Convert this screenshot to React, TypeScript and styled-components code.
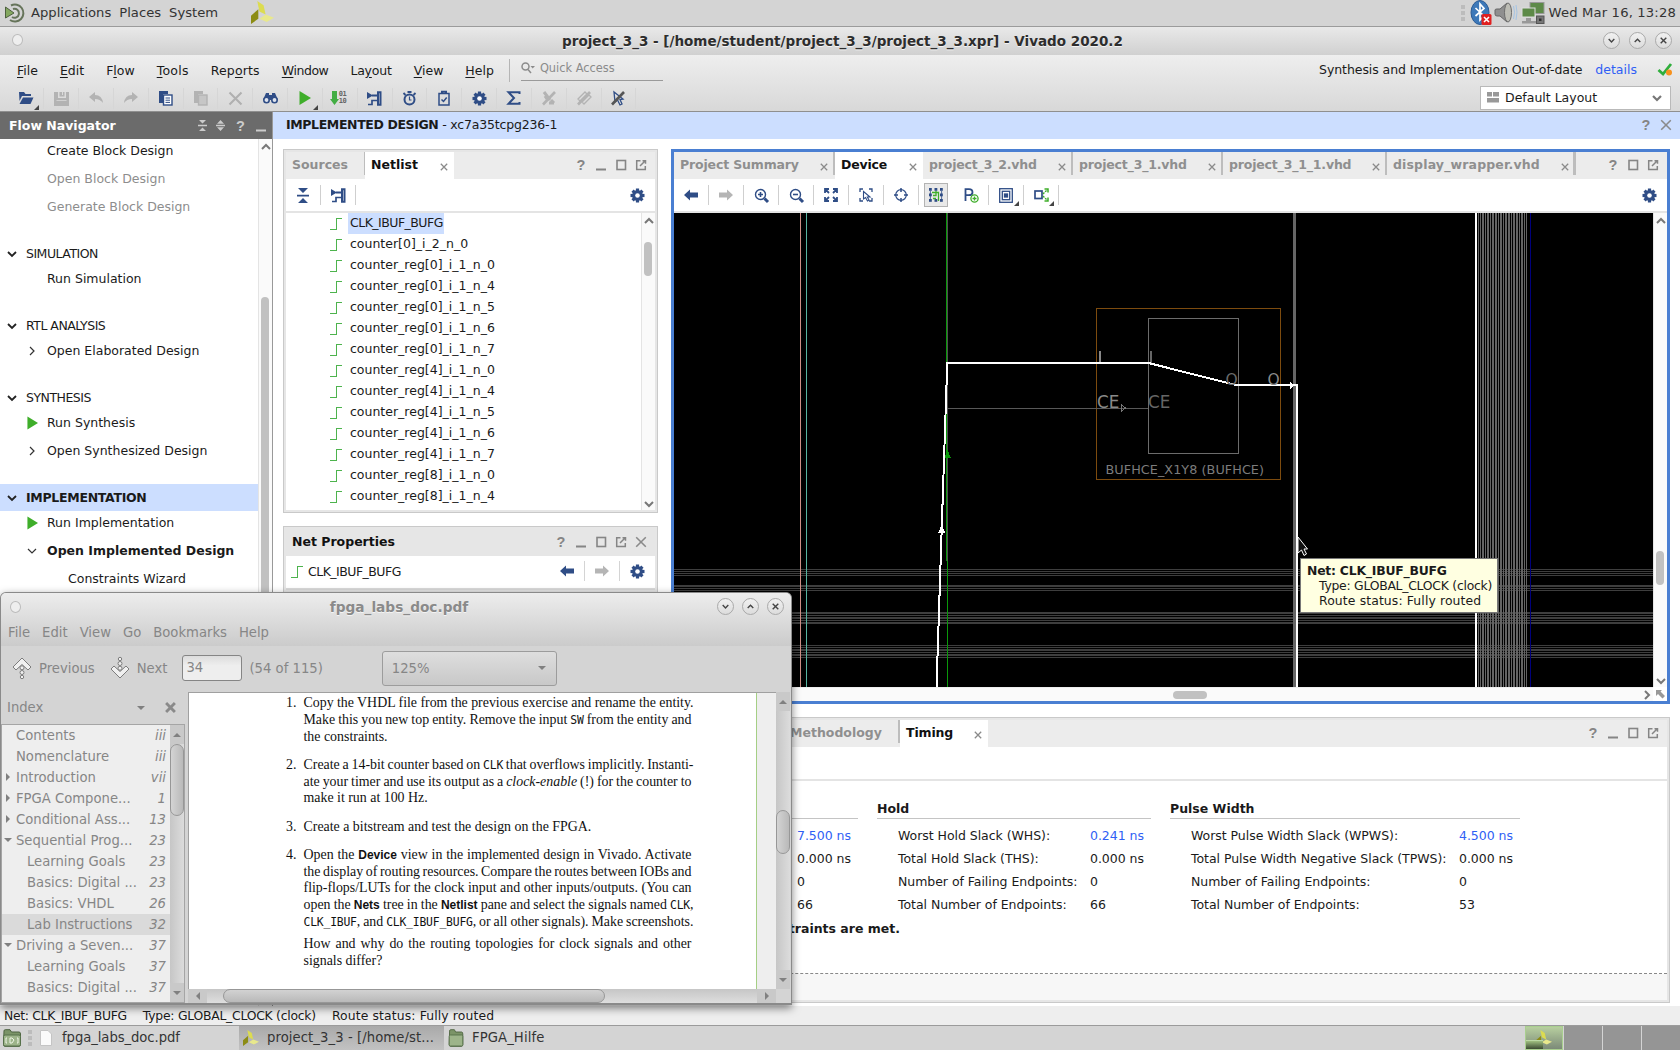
import React from 'react';
import styled, { createGlobalStyle, css } from 'styled-components';

const NAVY = '#2f4d86';
const GREEN = '#3fae2a';
const UI = '"DejaVu Sans", "Liberation Sans", sans-serif';

const Global = createGlobalStyle`
  * { box-sizing: border-box; }
  body { margin: 0; background: #d4d4d4; }
`;

const Screen = styled.div`
  position: relative;
  width: 1680px;
  height: 1050px;
  overflow: hidden;
  display: flex;
  flex-direction: column;
  font-family: ${UI};
  font-size: 12.5px;
  color: #1a1a1a;
  white-space: nowrap;
  svg { display: block; flex: none; overflow: visible; }
`;

const Track = styled.span<{ $ls: number }>`
  letter-spacing: ${p => p.$ls}px;
`;

/* ---------- desktop panel ---------- */
const TopPanel = styled.div`
  height: 27px;
  flex: none;
  display: flex;
  align-items: center;
  background: #d4d4d4;
  border-bottom: 1px solid #9b9b9b;
  font-size: 13.15px;
  color: #333;
  padding: 0 4px 1px 5px;
`;
const PanelMenu = styled.div`
  display: flex;
  gap: 8px;
  margin: 0 33px 0 6px;
`;
const Tray = styled.div`
  margin-left: auto;
  display: flex;
  align-items: center;
  gap: 4px;
`;
const Grip = styled.div`
  width: 4px;
  height: 16px;
  margin-right: 2px;
  background: repeating-linear-gradient(#bcbcbc 0 4px, transparent 4px 6px);
`;
const TaskGrip = styled(Grip)`
  margin: 0 4px 0 6px;
`;

/* ---------- main window chrome ---------- */
const TitleBar = styled.div`
  height: 28px;
  flex: none;
  display: flex;
  align-items: center;
  background: linear-gradient(#e9e9e9, #d0d0d0);
  padding: 0 8px 2px 12px;
`;
const Title = styled.div<{ $muted?: boolean }>`
  flex: 1;
  padding: ${p => (p.$muted ? '0 0 0 60px' : '2px 0 0 59px')};
  text-align: center;
  font-weight: bold;
  font-size: ${p => (p.$muted ? 13.7 : 13.53)}px;
  color: ${p => (p.$muted ? '#8a8a8a' : '#2d2d2d')};
  text-shadow: 0 1px 0 #f4f4f4;
`;
const Knob = styled.div`
  width: 11px;
  height: 12px;
  border-radius: 50%;
  border: 1px solid #bbb;
  background: #eee;
`;
const RoundBtns = styled.div<{ $gap: number }>`
  display: flex;
  gap: ${p => p.$gap}px;
`;
const RoundBtn = styled.div`
  width: 17px;
  height: 17px;
  border-radius: 50%;
  border: 1px solid #a9a9a9;
  background: linear-gradient(#f1f1f1, #dcdcdc);
  display: grid;
  place-items: center;
`;

const Header = styled.div`
  height: 57px;
  flex: none;
  background: linear-gradient(#eeeeee, #d8d8d8);
  border-bottom: 1px solid #8f8f8f;
`;
const MenuRow = styled.div`
  height: 30px;
  display: flex;
  align-items: center;
  padding: 1px 8px 0 6px;
`;
const MenuItem = styled.div<{ $ls: number }>`
  padding: 0 11px;
  letter-spacing: ${p => p.$ls}px;
  u { text-underline-offset: 2px; }
`;
const QuickAccess = styled.div`
  margin-left: 4px;
  padding-left: 11px;
  height: 23px;
  display: flex;
  border-left: 1px solid #b5b5b5;
`;
const QuickField = styled.div`
  width: 142px;
  height: 22px;
  display: flex;
  align-items: center;
  gap: 5px;
  padding-bottom: 3px;
  border-bottom: 1px solid #9a9a9a;
  font-size: 11.4px;
  color: #8b8b8b;
`;
const StatusNote = styled.div`
  margin-left: auto;
  display: flex;
  align-items: center;
  padding-bottom: 2px;
  letter-spacing: -0.08px;
  a { color: #2f5ff5; margin: 0 21px 0 13px; letter-spacing: 0; }
`;
const ToolRow = styled.div`
  height: 26px;
  display: flex;
  align-items: center;
  padding: 0 9px 0 9.5px;
`;
const ToolCell = styled.div`
  position: relative;
  width: 34.83px;
  height: 21px;
  border-right: 1px solid #d6d6d6;
  display: grid;
  place-items: center;
`;
const LayoutSelect = styled.div`
  margin-left: auto;
  width: 191px;
  height: 24px;
  border: 1px solid #b9b9b9;
  background: #fff;
  display: flex;
  align-items: center;
  padding: 0 8px 1px 6px;
  gap: 6px;
  svg:last-child { margin-left: auto; }
`;
const Corner = styled.i`
  position: absolute;
  right: 4px;
  bottom: -1px;
  border-left: 5px solid transparent;
  border-bottom: 5px solid #444;
`;

/* ---------- body ---------- */
const Body = styled.div`
  height: 894px;
  flex: none;
  display: flex;
  background: #fff;
`;
const FlowNav = styled.div`
  width: 273px;
  flex: none;
  border-right: 1px solid #999;
  display: flex;
  flex-direction: column;
`;
const FlowHead = styled.div`
  height: 27px;
  flex: none;
  background: #6b6b6b;
  color: #fff;
  font-weight: bold;
  display: flex;
  align-items: center;
  padding: 0 5px 0 9px;
  gap: 8.5px;
  b { flex: 1; }
`;
const FlowBody = styled.div`
  flex: 1;
  min-height: 0;
  display: flex;
`;
const FlowTree = styled.div`
  flex: 1;
  overflow: hidden;
`;
const FlowGroup = styled.div<{ $on?: boolean }>`
  height: 27px;
  margin-top: 22px;
  display: flex;
  align-items: center;
  padding-left: 7px;
  gap: 9px;
  background: ${p => (p.$on ? '#ccdeff' : 'none')};
  font-weight: ${p => (p.$on ? 'bold' : 'normal')};
  letter-spacing: ${p => (p.$on ? '-0.3px' : '-0.5px')};
`;
const FlowItem = styled.div<{ $dim?: boolean; $bold?: boolean; $deep?: boolean }>`
  height: 23px;
  display: flex;
  align-items: center;
  padding-left: ${p => (p.$deep ? 48 : 27)}px;
  color: ${p => (p.$dim ? '#8d8d8d' : '#1a1a1a')};
  font-weight: ${p => (p.$bold ? 'bold' : 'normal')};
  & + & { margin-top: 5px; }
`;
const Slot = styled.span`
  width: 20px;
  flex: none;
  svg { display: block; }
`;
const ScrollCol = styled.div<{ $w: number }>`
  width: ${p => p.$w}px;
  flex: none;
  border-left: 1px solid #e4e4e4;
  background: #fafafa;
  display: flex;
  flex-direction: column;
  align-items: center;
`;
const Thumb = styled.div<{ $h: number; $mt: number }>`
  width: 8px;
  height: ${p => p.$h}px;
  margin-top: ${p => p.$mt}px;
  margin-right: 1px;
  border-radius: 4px;
  background: #c1c1c1;
`;
const ScrollEnd = styled.div`
  margin-top: auto;
`;
const Main = styled.div`
  flex: 1;
  display: flex;
  flex-direction: column;
`;
const DesignBar = styled.div`
  height: 27px;
  background: #ccdeff;
  display: flex;
  align-items: center;
  gap: 8px;
  padding: 0 8px 2px 13px;
`;
const DesignName = styled.div`
  flex: 1;
  letter-spacing: -0.18px;
  b { letter-spacing: -0.38px; }
`;
const Workspace = styled.div`
  flex: 1;
  display: flex;
  flex-direction: column;
  gap: 13px;
  padding: 10px 10px 3px;
`;
const UpperRow = styled.div`
  height: 555px;
  display: flex;
  gap: 13px;
`;
const LeftCol = styled.div`
  width: 375px;
  display: flex;
  flex-direction: column;
  gap: 13px;
`;
const Panel = styled.section<{ $h?: number; $active?: boolean }>`
  ${p => (p.$h ? css`height: ${p.$h}px;` : css`flex: 1;`)}
  min-height: 0;
  display: flex;
  flex-direction: column;
  ${p =>
    p.$active
      ? css`border: 3px solid #4a7fd2;`
      : css`border: 1px solid #c9c9c9; padding: 2px; background: #e6e6e6;`}
`;
const Tabs = styled.div<{ $solid?: boolean }>`
  height: 27px;
  flex: none;
  background: ${p => (p.$solid ? '#e6e6e6' : '#ececec')};
  display: flex;
  align-items: center;
  padding-right: 8px;
`;
const Tab = styled.div<{ $w: number; $on?: boolean; $sep?: number; $ls?: number }>`
  width: ${p => p.$w}px;
  height: 27px;
  flex: none;
  display: flex;
  align-items: center;
  justify-content: space-between;
  padding: 0 6px 2px 6px;
  font-weight: bold;
  letter-spacing: ${p => p.$ls ?? 0}px;
  color: ${p => (p.$on ? '#111' : '#8f8f8f')};
  background-color: ${p => (p.$on ? '#fff' : 'transparent')};
  background-image: linear-gradient(#bdbdbd, #bdbdbd);
  background-repeat: no-repeat;
  background-position: right top;
  background-size: ${p => p.$sep ?? 0}px 23px;
  svg { margin-top: 4px; margin-right: ${p => (p.$on ? 0 : 1)}px; }
`;
const PanelTitle = styled.div`
  padding: 0 6px 2px;
  font-weight: bold;
  color: #111;
`;
const TabActions = styled.div`
  margin-left: auto;
  display: flex;
  align-items: center;
  gap: 8px;
  padding-bottom: 1px;
`;
const Tools = styled.div`
  height: 34px;
  flex: none;
  background: #fff;
  border-bottom: 2px solid #e4e4e4;
  display: flex;
  align-items: center;
  padding-right: 10px;
  & > svg:last-child { margin-left: auto; }
`;
const PCell = styled(ToolCell)<{ $pressed?: boolean }>`
  width: 35px;
  height: 20px;
  border-right-color: ${p => (p.$pressed ? 'transparent' : '#cfcfcf')};
  &::before {
    content: '';
    position: absolute;
    inset: -2px 5px -2px 5px;
    ${p => p.$pressed && css`background: #e9e9e9; border: 1px solid #b3b3b3;`}
  }
  svg { position: relative; }
`;
const ListWrap = styled.div`
  flex: 1;
  min-height: 0;
  background: #fff;
  display: flex;
`;
const NetList = styled.div`
  flex: 1;
`;
const NetRow = styled.div`
  height: 21px;
  display: flex;
  align-items: center;
  padding-left: 44px;
  gap: 6px;
`;
const NetName = styled.span<{ $on?: boolean }>`
  height: 21px;
  line-height: 20px;
  padding: 0 1px 0 2px;
  background: ${p => (p.$on ? '#ccdeff' : 'none')};
  letter-spacing: ${p => (p.$on ? '-0.52px' : '0')};
`;
const NetPropRow = styled.div`
  height: 34px;
  flex: none;
  background: #fff;
  border-bottom: 2px solid #d9d9d9;
  display: flex;
  align-items: center;
  padding: 0 10px 2px 5px;
  gap: 5px;
  span { flex: 1; letter-spacing: -0.52px; }
`;
const Divider = styled.div`
  width: 1px;
  height: 20px;
  margin: 0 5px;
  background: #d4d4d4;
`;

/* ---------- device view ---------- */
const DeviceArea = styled.div`
  flex: 1;
  min-height: 0;
  display: grid;
  grid-template-columns: 979px 14px;
  grid-template-rows: 474px 14px;
`;
const Canvas = styled.div`
  position: relative;
  background: #000;
`;
const HScroll = styled.div`
  background: #fafafa;
  border-top: 1px solid #eee;
  display: flex;
  align-items: center;
  justify-content: flex-end;
  padding-right: 1px;
  div {
    width: 34px;
    height: 8px;
    border-radius: 4px;
    background: #c1c1c1;
    margin-right: 435px;
  }
`;
const Tip = styled.div`
  position: absolute;
  left: 626px;
  top: 345px;
  width: 198px;
  height: 55px;
  padding: 4px 0 0 6px;
  background: #ffffe1;
  border: 1px solid #777;
  line-height: 15px;
  font-size: 12.4px;
  b { letter-spacing: -0.22px; }
  div { padding-left: 12px; }
`;

/* ---------- timing ---------- */
const TimingBody = styled.div`
  flex: 1;
  background: #fff;
  border-bottom: 1px dashed #888;
  padding: 18px 0 0 18px;
`;
const TimingFoot = styled.div`
  height: 26px;
  flex: none;
  background: #f7f7f7;
`;
const Groups = styled.div`
  display: flex;
  padding-left: 280px;
  gap: 19px;
`;
const Group = styled.div<{ $w: number }>`
  width: ${p => p.$w}px;
`;
const GroupHead = styled.div`
  height: 20px;
  line-height: 19px;
  font-weight: bold;
  border-bottom: 1px solid #c4c4c4;
  margin-bottom: 5px;
`;
const Metric = styled.div`
  height: 23px;
  display: flex;
  align-items: center;
  padding-left: 21px;
  letter-spacing: -0.04px;
  span:first-child { flex: 1; }
`;
const MetricValue = styled.span<{ $link?: boolean }>`
  width: 61px;
  color: ${p => (p.$link ? '#2f5ff5' : 'inherit')};
`;
const Verdict = styled.div`
  width: 596px;
  text-align: right;
  font-weight: bold;
  line-height: 26px;
`;

/* ---------- status and task bars ---------- */
const StatusBar = styled.div`
  height: 20px;
  flex: none;
  background: #eee;
  border-bottom: 1px solid #9b9b9b;
  display: flex;
  align-items: center;
  gap: 16px;
  padding-left: 4px;
  font-size: 12.4px;
`;
const TaskBar = styled.div`
  height: 24px;
  flex: none;
  background: #d4d4d4;
  display: flex;
  align-items: center;
  font-size: 13.2px;
  color: #333;
  padding-left: 2px;
`;
const Task = styled.div<{ $w: number; $on?: boolean }>`
  width: ${p => p.$w}px;
  height: 24px;
  display: flex;
  align-items: center;
  gap: 8px;
  padding: 0 0 1px 4px;
  background: ${p => (p.$on ? 'linear-gradient(#a9a9a9, #c2c2c2)' : 'none')};
`;
const Pager = styled.div`
  margin-left: auto;
  display: flex;
  gap: 1px;
  background: #d4d4d4;
`;
const Desk = styled.div<{ $on?: boolean }>`
  position: relative;
  width: 38px;
  height: 24px;
  display: grid;
  place-items: center;
  background: ${p => (p.$on ? 'linear-gradient(#b7cf9f, #7c8a78)' : '#959595')};
  border: ${p => (p.$on ? '1px solid #a9cf8f' : '0')};
`;
const DeskWin = styled.div`
  position: absolute;
  left: 0;
  bottom: 0;
  width: 17px;
  height: 9px;
  background: linear-gradient(#9fbf80, #3c4a34);
  border-top: 1px solid #bcd8a4;
`;

/* ---------- document viewer window ---------- */
const PdfWindow = styled.div`
  position: absolute;
  left: 0;
  top: 592px;
  width: 792px;
  height: 413px;
  display: flex;
  flex-direction: column;
  background: #d4d4d4;
  border: 1px solid #8a8a8a;
  border-bottom-width: 2px;
  border-radius: 6px 6px 0 0;
  box-shadow: 0 3px 9px rgba(0, 0, 0, 0.5);
  font-size: 13.2px;
  color: #868686;
  overflow: hidden;
`;
const PdfTop = styled.div`
  height: 53px;
  flex: none;
  background: linear-gradient(#ededed, #cbcbcb);
`;
const PdfTitle = styled.div`
  height: 27px;
  display: flex;
  align-items: center;
  padding: 0 7px 0 9px;
`;
const PdfMenu = styled.div`
  height: 25px;
  display: flex;
  align-items: center;
  gap: 12px;
  padding-left: 7px;
`;
const PdfTools = styled.div`
  height: 46px;
  flex: none;
  display: flex;
  align-items: center;
  padding: 0 0 2px 11px;
`;
const PdfToolLabel = styled.span<{ $mr: number }>`
  margin: 0 ${p => p.$mr}px 0 7px;
`;
const PageEntry = styled.div`
  width: 60px;
  height: 26px;
  line-height: 23px;
  padding-left: 3px;
  border: 1px solid #858585;
  border-radius: 3px;
  background: linear-gradient(#dcdcdc, #eeeeee 40%);
  margin-right: 7px;
`;
const Zoom = styled.div`
  width: 175px;
  height: 35px;
  margin-left: 59px;
  padding: 0 10px 0 9px;
  border: 1px solid #9c9c9c;
  border-radius: 3px;
  background: linear-gradient(#dedede, #c8c8c8);
  display: flex;
  align-items: center;
  justify-content: space-between;
`;
const PdfBody = styled.div`
  flex: 1;
  min-height: 0;
  display: flex;
`;
const Side = styled.div`
  width: 184px;
  margin-right: 3px;
  flex: none;
  display: flex;
  flex-direction: column;
`;
const SideHead = styled.div`
  height: 32px;
  display: flex;
  align-items: center;
  padding: 0 9px 1px 6px;
  span { flex: 1; }
  svg:last-child { margin-left: 20px; }
`;
const SideBox = styled.div`
  flex: 1;
  min-height: 0;
  border: 1px solid #a5a5a5;
  display: flex;
  overflow: hidden;
`;
const IndexList = styled.div`
  flex: 1;
  background: #eeeeee;
`;
const IndexRow = styled.div<{ $on?: boolean; $sub?: boolean }>`
  height: 21px;
  display: flex;
  align-items: center;
  padding: 0 4px 1px ${p => (p.$sub ? 25 : 2)}px;
  background: ${p => (p.$on ? '#dadada' : 'none')};
  span { flex: 1; }
`;
const Twist = styled.b`
  width: 12px;
  flex: none;
`;
const Trough = styled.div<{ $w: number }>`
  width: ${p => p.$w}px;
  flex: none;
  background: linear-gradient(90deg, #c6c6c6, #dcdcdc);
  display: flex;
  flex-direction: column;
  align-items: center;
`;
const Stepper = styled.div<{ $w: number; $h: number }>`
  width: ${p => p.$w}px;
  height: ${p => p.$h}px;
  flex: none;
  background: #c9c9c9;
  display: grid;
  place-items: center;
`;
const Slider = styled.div<{ $h: number; $mt: number }>`
  width: 100%;
  height: ${p => p.$h}px;
  margin: ${p => p.$mt}px 0 auto;
  border: 1px solid #979797;
  border-radius: 7px;
  background: linear-gradient(90deg, #d4d4d4, #b9b9b9);
`;
const PageArea = styled.div`
  flex: 1;
  display: grid;
  grid-template-columns: 588px 14px;
  grid-template-rows: 297px 14px;
`;
const PageView = styled.div`
  background: #eee;
  border: solid #a0a0a0;
  border-width: 1px 0 0 1px;
  overflow: hidden;
`;
const Page = styled.div`
  width: 568px;
  height: 297px;
  background: #fff;
  border-right: 1px solid #a5cf85;
  padding: 2.4px 0 0 97px;
  font-family: "Liberation Serif", "Times New Roman", serif;
  font-size: 13.9px;
  line-height: 16.7px;
  color: #111;
`;
const Para = styled.div<{ $mt?: number }>`
  display: flex;
  margin-top: ${p => p.$mt ?? 0}px;
`;
const Num = styled.span`
  width: 17.5px;
  flex: none;
`;
const Line = styled.div<{ $w?: number }>`
  ${p => p.$w && css`width: ${p.$w}px; text-align-last: justify; word-spacing: -1.3px;`}
  height: 16.7px;
  code { font: 11.4px/1 "DejaVu Sans Mono", monospace; letter-spacing: -0.2px; }
  b { font: bold 12px/1 "Liberation Sans", sans-serif; }
`;
const PdfHScroll = styled.div`
  display: flex;
  background: linear-gradient(#c6c6c6, #dedede);
  & > div:last-child { margin-left: auto; }
`;
const HSlider = styled.div`
  width: 382px;
  height: 14px;
  margin-left: 16px;
  border: 1px solid #979797;
  border-radius: 7px;
  background: linear-gradient(#d2d2d2, #b9b9b9);
`;

/* ---------- icons ---------- */
type P = { c?: string };
const Chev = ({ d, c = '#777', s = 10, w = 2 }: { d: 'u' | 'd' | 'r'; c?: string; s?: number; w?: number }) => (
  <svg width={s} height={s} viewBox="0 0 10 10" fill="none" stroke={c} strokeWidth={w}>
    <path d={d === 'u' ? 'M1 7.2L5 3.2L9 7.2' : d === 'd' ? 'M1 3L5 7L9 3' : 'M3 1L7 5L3 9'} />
  </svg>
);
const Tri = ({ d, c = '#808080' }: { d: 'u' | 'd' | 'r' | 'l'; c?: string }) => (
  <svg width="8" height="8" viewBox="0 0 8 8" fill={c}>
    <path d={{ u: 'M0 6L4 2L8 6Z', d: 'M0 2L4 6L8 2Z', r: 'M2 0L6 4L2 8Z', l: 'M6 0L2 4L6 8Z' }[d]} />
  </svg>
);
const X = ({ c = '#8a8a8a', s = 8, w = 1.6 }: { c?: string; s?: number; w?: number }) => (
  <svg width={s} height={s} viewBox="0 0 10 10" stroke={c} strokeWidth={w}>
    <path d="M1 1L9 9M9 1L1 9" />
  </svg>
);
const HelpMark = styled.span<{ $c?: string }>`
  width: 12px;
  font: bold 14.5px "Liberation Sans", sans-serif;
  text-align: center;
  color: ${p => p.$c ?? '#858585'};
`;
const Mini = ({ c = '#858585' }: P) => (
  <svg width="12" height="12"><path d="M1 10.5h10" stroke={c} strokeWidth="2" /></svg>
);
const Maxi = () => (
  <svg width="12" height="12"><rect x="2" y="1.5" width="8.5" height="9" fill="none" stroke="#858585" strokeWidth="1.6" /></svg>
);
const Float = () => (
  <svg width="12" height="12" fill="none" stroke="#858585" strokeWidth="1.5"><path d="M5.5 1.7H1.7v8.8h8.6V7M5 7L9.5 2.5M7.5 1.7h3v3" /></svg>
);
const GearIcon = ({ c = NAVY }: P) => (
  <svg width="15" height="15" viewBox="-7.5 -7.5 15 15">
    {[0, 45, 90, 135].map(a => <rect key={a} x="-1.6" y="-7" width="3.2" height="14" fill={c} transform={`rotate(${a})`} />)}
    <circle r="3.9" fill="none" stroke={c} strokeWidth="3" />
    <circle r="2.3" fill="#fff" />
  </svg>
);
const Arrow = ({ back, c = NAVY }: { back?: boolean; c?: string }) => (
  <svg width="14" height="12" viewBox="0 0 14 12" fill={c}>
    <path d={back ? 'M0 6L6 0.5V3.5H14V8.5H6V11.5Z' : 'M14 6L8 0.5V3.5H0V8.5H8V11.5Z'} />
  </svg>
);
const Play = ({ s = 12 }: { s?: number }) => (
  <svg width={s} height="14" viewBox="0 0 12 14"><path d="M0.5 0L12 7L0.5 14Z" fill={GREEN} /></svg>
);
const Wave = () => (
  <svg width="12" height="13" shapeRendering="crispEdges"><path d="M0 12.5H6.5V1.5H12" fill="none" stroke="#4db34d" strokeWidth="1" /></svg>
);
const Collapse = () => (
  <svg width="12" height="15" fill={NAVY}><path d="M1 0h10L6 5ZM0 6.7h12v1.8H0ZM1 15h10L6 10Z" /></svg>
);
const Schem = () => (
  <svg width="15" height="15" fill="none" stroke={NAVY} strokeWidth="2">
    <path d="M0 1L6 4.5L0 8Z" fill={NAVY} stroke="none" /><path d="M10 1.2H13.5V13.8H10M11 1V14M5 4.5H10" /><path d="M1 13.5H5V9.5H10" strokeWidth="1.7" />
  </svg>
);
const Xilinx = ({ s = 22 }: { s?: number }) => (
  <svg width={s} height={s} viewBox="0 0 22 22">
    <path d="M6 0L12 4L14 13L8 10Z" fill="#dcdc50" /><path d="M0 14L7 8V17L0 22Z" fill="#8c8c14" /><path d="M8 17L14 13L22 16L15 20Z" fill="#e8e88c" />
  </svg>
);
const FolderG = ({ home, w = 20 }: { home?: boolean; w?: number }) => (
  <svg width={w} height="18" viewBox="0 0 20 18" preserveAspectRatio="none">
    <path d="M2 2Q2 .7 3.300 .7H8L9.500 3H17Q18.500 3 18.500 5V15.500Q18.500 17.300 17 17.300H3Q1.500 17.300 1.500 15.500Z" fill="#7b9468" stroke="#4d6340" />
    <rect x="1.500" y="6" width="17" height="11" rx="1.500" fill="#9db48a" stroke="#56704a" />
    {home && <path d="M5 9H4v5h1M15 9h1v5h-1M8 9h2l2 2-2 3H8Z" fill="none" stroke="#eef5e6" />}
  </svg>
);
const Open = () => (
  <svg width="16" height="14" viewBox="0 0 16 14" fill={NAVY}><path d="M1 1H6L7.500 3H13V5H4L1.500 10Z" /><path d="M5 6.500H15.500L12.500 13H1.500Z" /></svg>
);
const Save = () => (
  <svg width="15" height="15"><path d="M0 1H15V15H0Z" fill="#b3b3b3" /><path d="M4 1H5.500V5.500H10.500V1H12V7H4ZM2.500 9H12.500V9.800H2.500Z" fill="#dcdcdc" /><path d="M8 1H9V4H8Z" fill="#dcdcdc" /></svg>
);
const Undo = ({ flip }: { flip?: boolean }) => (
  <svg width="14" height="12" viewBox="0 0 14 12" fill="#b3b3b3">
    <path transform={flip ? 'matrix(-1 0 0 1 14 0)' : undefined} d="M0 5L6 0V3Q13 3 14 11Q11 7 6 7V10Z" />
  </svg>
);
const Copy = ({ c = NAVY, dim }: { c?: string; dim?: boolean }) => (
  <svg width="14" height="15"><path d="M0 0H9V3H4V12H0Z" fill={c} /><rect x="4.500" y="4" width="8.500" height="10" fill={dim ? '#c6c6c6' : '#fff'} stroke={c} strokeWidth="1.400" />
    {!dim && <path d="M6.500 7H11M6.500 9.200H11M6.500 11.400H11" stroke={c} />}</svg>
);
const Bino = () => (
  <svg width="15" height="12" viewBox="0 0 15 12"><path d="M3 1H6V3H9V1H12L15 8H0Z" fill={NAVY} /><circle cx="3.500" cy="8" r="2.700" fill="#dfe4ee" stroke={NAVY} strokeWidth="1.600" /><circle cx="11.500" cy="8" r="2.700" fill="#dfe4ee" stroke={NAVY} strokeWidth="1.600" /></svg>
);
const BitText = styled.div`
  display: flex;
  align-items: center;
  gap: 1px;
  margin-left: -2px;
  span { font: bold 7px/7px "DejaVu Sans Mono", monospace; color: #666; width: 8px; letter-spacing: -0.5px; }
`;
const Bits = () => (
  <BitText><svg width="7" height="14" fill="#43ad43"><path d="M1 0H6V8H8L3.500 14L-1 8H1Z" /></svg><span>01<br />10</span></BitText>
);
const Clock = () => (
  <svg width="15" height="15" fill="none" stroke={NAVY}><circle cx="7.500" cy="8.500" r="5" strokeWidth="2" /><path d="M5.500 1H9.500M1.500 2L3.500 4M13.500 2L11.500 4" strokeWidth="1.800" /><path d="M7.500 5.500V9H9.500" strokeWidth="1.200" /></svg>
);
const Clip = () => (
  <svg width="12" height="15" fill="none" stroke={NAVY} strokeWidth="1.500"><rect x="1" y="2.500" width="10" height="11.500" /><path d="M4 2.500V0.800H8V2.500" strokeWidth="2" /><path d="M3.500 8.500L5.500 10.500L8.700 6.500" /></svg>
);
const Sigma = () => (
  <svg width="14" height="14"><path d="M12.500 3V1.200H1.500L7 7L1.500 12.800H12.500V11" fill="none" stroke={NAVY} strokeWidth="2" /></svg>
);
const Slash = ({ c, k }: { c: string; k: number }) => (
  <svg width="14" height="14" fill="none" stroke={c} strokeWidth="1.300">
    {k === 0 && <path d="M2 1L8 9M3 5L5 8M7 12L12 12M9 9L12 12" strokeWidth="3" />}
    {k === 1 && <path d="M1 8L8 1L10 3L3 10ZM5 11L12 4L14 6L7 13Z" />}
    {k === 2 && <path d="M3 1L4 11L6.500 9L9 14L11 13L9 8.500L12 8Z" stroke={NAVY} />}
    <path d="M1 13.500L13 1" strokeWidth="2.600" stroke={k === 2 ? '#555' : c} />
  </svg>
);
const ZoomI = ({ plus }: { plus?: boolean }) => (
  <svg width="15" height="15" fill="none" stroke={NAVY}><circle cx="6.500" cy="6.500" r="5" strokeWidth="1.400" /><path d="M10.500 10.500L14 14" strokeWidth="3" /><path d={plus ? 'M4 6.500H9M6.500 4V9' : 'M4 6.500H9'} strokeWidth="1.600" /></svg>
);
const Fit = () => (
  <svg width="14" height="14" fill="none" stroke={NAVY} strokeWidth="1.800"><path d="M1 5V1H5M9 1H13V5M13 9V13H9M5 13H1V9M1 1L5 5M13 1L9 5M13 13L9 9M1 13L5 9" /></svg>
);
const SelArea = () => (
  <svg width="14" height="14" fill="none" stroke={NAVY} strokeWidth="1.300"><path d="M1 4V1H4M10 1H13V4M13 10V13H10M4 13H1V10" /><path d="M4.500 3.500V11L6.500 9.500L8.500 13L10 12L8.300 9H11Z" strokeWidth="1.100" /></svg>
);
const Target = () => (
  <svg width="14" height="14" fill="none" stroke={NAVY}><circle cx="7" cy="7" r="5.300" strokeWidth="1.200" /><path d="M7 0V4M7 10V14M0 7H4M10 7H14" strokeWidth="1.500" /></svg>
);
const Routing = () => (
  <svg width="14" height="14"><g fill={NAVY}>{[0, 5.5, 11].map(y => [0, 5.5, 11].map(x => (y === 5.5 && x === 5.5 ? null : <rect key={`${x}-${y}`} x={x} y={y} width="2.8" height="2.8" />)))}</g><path d="M1.400 3V11M12.600 3V11" stroke={NAVY} strokeWidth=".8" /><path d="M3 4.500H9.500V13M7 3V7.500H4M4 10.500H7" fill="none" stroke={GREEN} strokeWidth="1.300" /></svg>
);
const PPlus = () => (
  <svg width="15" height="15" fill="none"><path d="M1.500 13V1.200H5Q8.500 1.200 8.500 4.200T5 7.200H2" stroke={NAVY} strokeWidth="1.800" /><circle cx="10.500" cy="10.500" r="3.600" stroke={GREEN} fill="#fff" strokeWidth="1.300" /><path d="M8.500 10.500H12.500M10.500 8.500V12.500" stroke={GREEN} strokeWidth="1.300" /></svg>
);
const Nested = () => (
  <svg width="14" height="15" fill="none" stroke={NAVY} strokeWidth="1.300"><rect x=".7" y=".7" width="12.600" height="13.600" /><rect x="3.300" y="3.300" width="7.400" height="8.400" /><rect x="5.500" y="6" width="3" height="3" fill={NAVY} /></svg>
);
const Fan = () => (
  <svg width="15" height="14" fill="none"><rect x="1" y="3" width="7" height="7.500" stroke={NAVY} strokeWidth="1.700" /><path d="M9 6L13.500 1.500M9 8L13.500 12.500" stroke={GREEN} strokeWidth="1.400" strokeDasharray="2 1" /><path d="M10.500 1H14V4.500M10.500 13H14V9.500" stroke={GREEN} strokeWidth="1.500" /></svg>
);
const MateLogo = () => (
  <svg width="20" height="20" viewBox="0 0 20 20" fill="none" stroke="#66745a"><path d="M6 2.500A8.500 8.500 0 1 1 5 17" strokeWidth="2" /><path d="M8 6A4.500 4.500 0 1 1 7 14" strokeWidth="2" /><path d="M0.500 4L9 10L0.500 15Z" fill="#84a860" stroke="#4e6040" /></svg>
);
const Bluetooth = () => (
  <svg width="20" height="25" viewBox="0 0 20 25"><ellipse cx="9" cy="12.500" rx="9" ry="12" fill="#3d78b8" stroke="#2a5a94" /><path d="M4.500 8L13 16L9 20V4L13 8.500L4.500 16" fill="none" stroke="#fff" strokeWidth="1.700" /><rect x="10.500" y="14" width="10" height="11" rx="1.500" fill="#e02020" /><path d="M13 17L18 22M18 17L13 22" stroke="#fff" strokeWidth="1.600" /></svg>
);
const Speaker = () => (
  <svg width="22" height="22" viewBox="0 0 22 22"><path d="M0 8Q0 7 2 7H5L12 1V20L5 14H2Q0 14 0 12Z" fill="#8f8f8f" stroke="#666" /><ellipse cx="13" cy="10.500" rx="3.500" ry="9.500" fill="#bdbdb5" stroke="#6d6d6d" /><path d="M18.500 4Q20.500 10 18.500 17M21 3Q23 10 21 18" fill="none" stroke="#a5c4e4" /></svg>
);
const Network = () => (
  <svg width="24" height="22" viewBox="0 0 24 22"><rect x="9" y="0.500" width="14" height="11" fill="#5d8a48" stroke="#999" /><rect x="1" y="6" width="13" height="9" fill="#5d8a48" stroke="#ddd" /><path d="M1 19H15V21.500H1ZM5 16H10V19H5Z" fill="#999" /><rect x="15.500" y="14" width="7.500" height="7.500" fill="#777" stroke="#555" /><rect x="18" y="16.500" width="2.500" height="2.500" fill="#333" /></svg>
);
const PdfArrow = ({ down }: { down?: boolean }) => (
  <svg width="20" height="22" viewBox="0 0 20 22" fill="#f0f0f0" stroke="#7d7d7d"><g transform={down ? 'matrix(1 0 0 -1 0 22)' : undefined}><path d="M10 1L19 10L16 13L10 7.500L4 13L1 10Z" /><circle cx="10" cy="10.800" r="2" /><circle cx="10" cy="15.500" r="2" /><circle cx="10" cy="20" r="1.700" /></g></svg>
);

/* ---------- device drawing ---------- */
const H_LINES: [number, number][] = [
  [569, 1], [571, 1], [573, 1], [575, 1], [585, 2], [588, 1], [590, 1], [612, 2], [615, 1], [617, 2], [620, 1],
  [622, 2], [645, 1], [647, 1], [649, 2], [652, 1], [654, 2], [657, 1],
];
const V_STRIPES: [number, number][] = [
  [1478, 1], [1480, 1], [1482, 2], [1485, 1], [1487, 2], [1490, 1], [1492, 2], [1495, 2], [1498, 1], [1500, 2], [1503, 1],
  [1505, 2], [1508, 2], [1511, 1], [1513, 2], [1516, 2], [1519, 1], [1521, 2], [1524, 1], [1526, 1],
];
const DrawingSvg = styled.svg`
  && { overflow: hidden; }
  font-family: ${UI};
`;
const DeviceDrawing = () => (
  <DrawingSvg width="979" height="474" viewBox="674 213 979 474">
    <g shapeRendering="crispEdges">
      {H_LINES.map(([y, h]) => <rect key={y} x="674" y={y} width="979" height={h} fill="#3e3e3e" />)}
      {V_STRIPES.map(([x, w]) => <rect key={x} x={x} y="213" width={w} height="474" fill="#646464" />)}
      <rect x="800" y="213" width="1" height="474" fill="#cc8f86" />
      <rect x="806" y="213" width="1" height="474" fill="#56b3a0" />
      <rect x="946" y="213" width="1" height="348" fill="#0a980a" />
      <rect x="947" y="213" width="1" height="348" fill="#505050" />
      <rect x="947" y="561" width="1" height="126" fill="#0a980a" />
      <rect x="1293" y="213" width="3" height="474" fill="#666" />
      <rect x="1475" y="213" width="2" height="474" fill="#fff" />
      <rect x="1530" y="213" width="1" height="474" fill="#00007c" />
      <rect x="1096.500" y="308.500" width="184" height="171" fill="none" stroke="#7d4b0e" />
      <rect x="1148.500" y="318.500" width="90" height="135" fill="none" stroke="#6c6c6c" />
      <path d="M947 408.500H1148" stroke="#585858" />
      <rect x="1296" y="384" width="2" height="303" fill="#fff" />
      <rect x="1099" y="351" width="2" height="12" fill="#888" />
      <rect x="1150" y="351" width="2" height="12" fill="#666" />
      <path d="M936.500 687L943 490L947 370V363H1148.500L1236 385H1298" fill="none" stroke="#fff" strokeWidth="2" />
      <path d="M947.500 450L951 458H944.500Z" fill="#0a980a" />
      <path d="M941.500 525L945.500 533H938Z" fill="#fff" />
      <path d="M1290 382L1294 385.500L1290 389Z" fill="#fff" />
      <path d="M1121.500 405L1125.500 408L1121.500 411Z" fill="none" stroke="#777" />
    </g>
    <g fontSize="16.800">
      <text x="1097" y="408" fill="#8a8a8a">CE</text>
      <text x="1148" y="408" fill="#666">CE</text>
      <text x="1225.500" y="385" fill="#6a6a6a" fontSize="15.500">O</text>
      <text x="1267.500" y="385" fill="#8a8a8a" fontSize="15.500">O</text>
    </g>
    <text x="1105.500" y="474" fontSize="12.800" fill="#7c7c7c" textLength="158.500">BUFHCE_X1Y8 (BUFHCE)</text>
    <path d="M1298 537V553L1301.500 550L1304 555.500L1306.500 554L1304 549H1307.500Z" fill="#111" stroke="#fff" />
  </DrawingSvg>
);

const Metrics = ({ rows }: { rows: [string, string][] }) => (
  <>
    {rows.map(([label, value], i) => (
      <Metric key={label}><span>{label}</span><MetricValue $link={i === 0}>{value}</MetricValue></Metric>
    ))}
  </>
);

const NETS = ['CLK_IBUF_BUFG', 'counter[0]_i_2_n_0', 'counter_reg[0]_i_1_n_0', 'counter_reg[0]_i_1_n_4', 'counter_reg[0]_i_1_n_5',
  'counter_reg[0]_i_1_n_6', 'counter_reg[0]_i_1_n_7', 'counter_reg[4]_i_1_n_0', 'counter_reg[4]_i_1_n_4', 'counter_reg[4]_i_1_n_5',
  'counter_reg[4]_i_1_n_6', 'counter_reg[4]_i_1_n_7', 'counter_reg[8]_i_1_n_0', 'counter_reg[8]_i_1_n_4'];

const INDEX: { t: string; p: string; tw?: 'r' | 'd'; sub?: boolean; on?: boolean }[] = [
  { t: 'Contents', p: 'iii' }, { t: 'Nomenclature', p: 'iii' }, { t: 'Introduction', p: 'vii', tw: 'r' },
  { t: 'FPGA Compone...', p: '1', tw: 'r' }, { t: 'Conditional Ass...', p: '13', tw: 'r' }, { t: 'Sequential Prog...', p: '23', tw: 'd' },
  { t: 'Learning Goals', p: '23', sub: true }, { t: 'Basics: Digital ...', p: '23', sub: true }, { t: 'Basics: VHDL', p: '26', sub: true },
  { t: 'Lab Instructions', p: '32', sub: true, on: true }, { t: 'Driving a Seven...', p: '37', tw: 'd' },
  { t: 'Learning Goals', p: '37', sub: true }, { t: 'Basics: Digital ...', p: '37', sub: true },
];

const MENUS: [string, string, string, number][] = [['', 'F', 'ile', 0], ['', 'E', 'dit', 0], ['F', 'l', 'ow', 0], ['', 'T', 'ools', 0.25],
  ['Rep', 'o', 'rts', 0.15], ['', 'W', 'indow', -0.45], ['La', 'y', 'out', -0.2], ['', 'V', 'iew', 0], ['', 'H', 'elp', 0]];

const WindowButtons = ({ gap }: { gap: number }) => (
  <RoundBtns $gap={gap}>
    <RoundBtn><Chev d="d" c="#444" s={7} /></RoundBtn>
    <RoundBtn><Chev d="u" c="#444" s={7} /></RoundBtn>
    <RoundBtn><X c="#444" s={7} w={2} /></RoundBtn>
  </RoundBtns>
);

const ScrollUp = () => (
  <svg width="10" height="16"><path d="M1 10L5 6L9 10" fill="none" stroke="#777" strokeWidth="2" /></svg>
);
const ScrollDown = () => (
  <ScrollEnd><svg width="10" height="12"><path d="M1 4L5 8L9 4" fill="none" stroke="#777" strokeWidth="2" /></svg></ScrollEnd>
);

export default function App() {
  return (
    <Screen>
      <Global />
      <TopPanel>
        <MateLogo />
        <PanelMenu><span>Applications</span><span>Places</span><span>System</span></PanelMenu>
        <Xilinx s={23} />
        <Tray><Grip /><Bluetooth /><Speaker /><Network /><Track $ls={0.16}>Wed Mar 16, 13:28</Track></Tray>
      </TopPanel>
      <TitleBar>
        <Knob />
        <Title>project_3_3 - [/home/student/project_3_3/project_3_3.xpr] - Vivado 2020.2</Title>
        <WindowButtons gap={9} />
      </TitleBar>
      <Header>
        <MenuRow>
          {MENUS.map(([a, u, b, ls]) => <MenuItem key={a + u + b} $ls={ls}>{a}<u>{u}</u>{b}</MenuItem>)}
          <QuickAccess>
            <QuickField>
              <svg width="14" height="12" fill="none" stroke="#8b8b8b" strokeWidth="1.500"><circle cx="4.500" cy="4.500" r="3.500" /><path d="M7 7.500L10 11" /><path d="M9.500 4H14L11.700 6.500Z" fill="#8b8b8b" stroke="none" /></svg>
              Quick Access
            </QuickField>
          </QuickAccess>
          <StatusNote>
            Synthesis and Implementation Out-of-date<a>details</a>
            <svg width="14" height="13"><path d="M0.500 7L5 11L13 1" fill="none" stroke="#2fae3c" strokeWidth="2.800" /><circle cx="11" cy="9.500" r="3" fill="#f7921e" /></svg>
          </StatusNote>
        </MenuRow>
        <ToolRow>
          <ToolCell><Open /><Corner /></ToolCell>
          <ToolCell><Save /></ToolCell>
          <ToolCell><Undo /></ToolCell>
          <ToolCell><Undo flip /></ToolCell>
          <ToolCell><Copy /></ToolCell>
          <ToolCell><Copy c="#b3b3b3" dim /></ToolCell>
          <ToolCell><X c="#b0b0b0" s={15} w={1.4} /></ToolCell>
          <ToolCell><Bino /></ToolCell>
          <ToolCell><Play /><Corner /></ToolCell>
          <ToolCell><Bits /></ToolCell>
          <ToolCell><Schem /></ToolCell>
          <ToolCell><Clock /></ToolCell>
          <ToolCell><Clip /></ToolCell>
          <ToolCell><GearIcon /></ToolCell>
          <ToolCell><Sigma /></ToolCell>
          <ToolCell><Slash k={0} c="#b3b3b3" /></ToolCell>
          <ToolCell><Slash k={1} c="#b3b3b3" /></ToolCell>
          <ToolCell><Slash k={2} c="#555" /></ToolCell>
          <LayoutSelect>
            <svg width="12" height="11" fill="#999"><path d="M0 0H5V4.500H0ZM6 0H12V4.500H6ZM0 6H12V10.500H0Z" /></svg>
            Default Layout
            <Chev d="d" w={2.2} />
          </LayoutSelect>
        </ToolRow>
      </Header>

      <Body>
        <FlowNav>
          <FlowHead>
            <b>Flow Navigator</b>
            <svg width="10" height="12" fill="#ccc"><path d="M1 0H8L4.500 3.500ZM0 4.800H9V6.200H0ZM1 11H8L4.500 7.500Z" /></svg>
            <svg width="10" height="12" fill="#ccc"><path d="M1 3.800L4.500 0L8 3.800ZM0 4.800H9V6.200H0ZM1 7.200L4.500 11L8 7.200Z" /></svg>
            <HelpMark $c="#ccc">?</HelpMark>
            <Mini c="#ccc" />
          </FlowHead>
          <FlowBody>
            <FlowTree>
              <FlowItem><Slot />Create Block Design</FlowItem>
              <FlowItem $dim><Slot />Open Block Design</FlowItem>
              <FlowItem $dim><Slot />Generate Block Design</FlowItem>
              <FlowGroup><Chev d="d" c="#222" w={1.8} />SIMULATION</FlowGroup>
              <FlowItem><Slot />Run Simulation</FlowItem>
              <FlowGroup><Chev d="d" c="#222" w={1.8} />RTL ANALYSIS</FlowGroup>
              <FlowItem><Slot><Chev d="r" c="#333" w={1.2} /></Slot>Open Elaborated Design</FlowItem>
              <FlowGroup><Chev d="d" c="#222" w={1.8} />SYNTHESIS</FlowGroup>
              <FlowItem><Slot><Play s={11} /></Slot>Run Synthesis</FlowItem>
              <FlowItem><Slot><Chev d="r" c="#333" w={1.2} /></Slot>Open Synthesized Design</FlowItem>
              <FlowGroup $on><Chev d="d" c="#222" w={1.8} />IMPLEMENTATION</FlowGroup>
              <FlowItem><Slot><Play s={11} /></Slot>Run Implementation</FlowItem>
              <FlowItem $bold><Slot><Chev d="d" c="#333" w={1.2} /></Slot>Open Implemented Design</FlowItem>
              <FlowItem $deep><Slot />Constraints Wizard</FlowItem>
            </FlowTree>
            <ScrollCol $w={14}>
              <ScrollUp />
              <Thumb $mt={142} $h={420} />
            </ScrollCol>
          </FlowBody>
        </FlowNav>

        <Main>
          <DesignBar>
            <DesignName><b>IMPLEMENTED DESIGN</b> - xc7a35tcpg236-1</DesignName>
            <HelpMark>?</HelpMark>
            <X s={12} w={1.3} />
          </DesignBar>
          <Workspace>
            <UpperRow>
              <LeftCol>
                <Panel $h={364}>
                  <Tabs>
                    <Tab $w={79} $sep={1}>Sources</Tab>
                    <Tab $w={89} $on>Netlist<X /></Tab>
                    <TabActions><HelpMark>?</HelpMark><Mini /><Maxi /><Float /></TabActions>
                  </Tabs>
                  <Tools>
                    <PCell><Collapse /></PCell>
                    <PCell><Schem /></PCell>
                    <GearIcon />
                  </Tools>
                  <ListWrap>
                    <NetList>
                      {NETS.map((n, i) => <NetRow key={n}><Wave /><NetName $on={i === 0}>{n}</NetName></NetRow>)}
                    </NetList>
                    <ScrollCol $w={14}>
                      <ScrollUp />
                      <Thumb $mt={13} $h={34} />
                      <ScrollDown />
                    </ScrollCol>
                  </ListWrap>
                </Panel>
                <Panel>
                  <Tabs $solid>
                    <PanelTitle>Net Properties</PanelTitle>
                    <TabActions><HelpMark>?</HelpMark><Mini /><Maxi /><Float /><X s={12} w={1.3} /></TabActions>
                  </Tabs>
                  <NetPropRow>
                    <Wave /><span>CLK_IBUF_BUFG</span>
                    <Arrow back /><Divider /><Arrow c="#b5b5b5" /><Divider /><GearIcon />
                  </NetPropRow>
                </Panel>
              </LeftCol>

              <Panel $active>
                <Tabs>
                  <Tab $w={161} $sep={2} $ls={-0.15}>Project Summary<X /></Tab>
                  <Tab $w={88} $on $ls={-0.2}>Device<X /></Tab>
                  <Tab $w={150} $sep={2} $ls={-0.18}>project_3_2.vhd<X /></Tab>
                  <Tab $w={150} $sep={2} $ls={-0.18}>project_3_1.vhd<X /></Tab>
                  <Tab $w={164} $sep={2} $ls={-0.18}>project_3_1_1.vhd<X /></Tab>
                  <Tab $w={189} $sep={3} $ls={0.15}>display_wrapper.vhd<X /></Tab>
                  <TabActions><HelpMark>?</HelpMark><Maxi /><Float /></TabActions>
                </Tabs>
                <Tools>
                  <PCell><Arrow back /></PCell>
                  <PCell><Arrow c="#b5b5b5" /></PCell>
                  <PCell><ZoomI plus /></PCell>
                  <PCell><ZoomI /></PCell>
                  <PCell><Fit /></PCell>
                  <PCell><SelArea /></PCell>
                  <PCell><Target /></PCell>
                  <PCell $pressed><Routing /></PCell>
                  <PCell><PPlus /></PCell>
                  <PCell><Nested /><Corner /></PCell>
                  <PCell><Fan /><Corner /></PCell>
                  <GearIcon />
                </Tools>
                <DeviceArea>
                  <Canvas>
                    <DeviceDrawing />
                    <Tip>
                      <b>Net: CLK_IBUF_BUFG</b>
                      <div><Track $ls={-0.25}>Type: GLOBAL_CLOCK (clock)</Track></div>
                      <div><Track $ls={0.12}>Route status: Fully routed</Track></div>
                    </Tip>
                  </Canvas>
                  <ScrollCol $w={14}>
                    <ScrollUp />
                    <Thumb $mt={322} $h={34} />
                    <ScrollDown />
                  </ScrollCol>
                  <HScroll><div /><Chev d="r" /></HScroll>
                  <svg width="14" height="14"><path d="M3 3H9L7.500 4.500L12 9L9.500 11.500L5 7L3 9Z" fill="#999" /></svg>
                </DeviceArea>
              </Panel>
            </UpperRow>

            <Panel $h={286}>
              <Tabs>
                <Tab $w={498} />
                <Tab $w={116} $sep={2}>Methodology</Tab>
                <Tab $w={88} $on $ls={-0.15}>Timing<X /></Tab>
                <TabActions><HelpMark>?</HelpMark><Mini /><Maxi /><Float /></TabActions>
              </Tabs>
              <Tools />
              <TimingBody>
                <Groups>
                  <Group $w={274}><GroupHead>Setup</GroupHead><Metrics rows={[['Worst Negative Slack (WNS):', '7.500 ns'], ['Total Negative Slack (TNS):', '0.000 ns'], ['Number of Failing Endpoints:', '0'], ['Total Number of Endpoints:', '66']]} /></Group>
                  <Group $w={274}><GroupHead>Hold</GroupHead><Metrics rows={[['Worst Hold Slack (WHS):', '0.241 ns'], ['Total Hold Slack (THS):', '0.000 ns'], ['Number of Failing Endpoints:', '0'], ['Total Number of Endpoints:', '66']]} /></Group>
                  <Group $w={350}><GroupHead>Pulse Width</GroupHead><Metrics rows={[['Worst Pulse Width Slack (WPWS):', '4.500 ns'], ['Total Pulse Width Negative Slack (TPWS):', '0.000 ns'], ['Number of Failing Endpoints:', '0'], ['Total Number of Endpoints:', '53']]} /></Group>
                </Groups>
                <Verdict>All user specified timing constraints are met.</Verdict>
              </TimingBody>
              <TimingFoot />
            </Panel>
          </Workspace>
        </Main>
      </Body>

      <StatusBar>
        <Track $ls={-0.32}>Net: CLK_IBUF_BUFG</Track>
        <Track $ls={-0.25}>Type: GLOBAL_CLOCK (clock)</Track>
        <Track $ls={0.12}>Route status: Fully routed</Track>
      </StatusBar>
      <TaskBar>
        <FolderG home />
        <TaskGrip />
        <Task $w={203}>
          <svg width="14" height="16"><path d="M.5 .5H8L11.500 4V15.500H.5Z" fill="#fafafa" stroke="#c4c4c4" /></svg>
          <Track $ls={-0.06}>fpga_labs_doc.pdf</Track>
        </Task>
        <Task $w={205} $on><Xilinx s={16} /><Track $ls={0.08}>project_3_3 - [/home/st...</Track></Task>
        <Task $w={150}><FolderG w={16} /><Track $ls={0.1}>FPGA_Hilfe</Track></Task>
        <Pager><Desk $on><Xilinx s={16} /><DeskWin /></Desk><Desk /><Desk /><Desk /></Pager>
      </TaskBar>

      <PdfWindow>
        <PdfTop>
          <PdfTitle><Knob /><Title $muted>fpga_labs_doc.pdf</Title><WindowButtons gap={8} /></PdfTitle>
          <PdfMenu><span>File</span><span>Edit</span><span>View</span><span>Go</span><span>Bookmarks</span><span>Help</span></PdfMenu>
        </PdfTop>
        <PdfTools>
          <PdfArrow /><PdfToolLabel $mr={15}>Previous</PdfToolLabel>
          <PdfArrow down /><PdfToolLabel $mr={15}>Next</PdfToolLabel>
          <PageEntry>34</PageEntry>(54 of 115)
          <Zoom>125%<Tri d="d" /></Zoom>
        </PdfTools>
        <PdfBody>
          <Side>
            <SideHead><span>Index</span><Tri d="d" /><X s={11} w={2.6} /></SideHead>
            <SideBox>
              <IndexList>
                {INDEX.map((r, i) => (
                  <IndexRow key={i} $on={r.on} $sub={r.sub}>
                    {!r.sub && <Twist>{r.tw && <Tri d={r.tw} />}</Twist>}
                    <span>{r.t}</span><i>{r.p}</i>
                  </IndexRow>
                ))}
              </IndexList>
              <Trough $w={14}>
                <Stepper $w={14} $h={19}><Tri d="u" /></Stepper>
                <Slider $h={72} $mt={0} />
                <Stepper $w={14} $h={19}><Tri d="d" /></Stepper>
              </Trough>
            </SideBox>
          </Side>
          <PageArea>
            <PageView>
              <Page>
                <Para><Num>1.</Num><div>
                  <Line $w={390}>Copy the VHDL file from the previous exercise and rename the entity.</Line>
                  <Line $w={388}>Make this you new top entity. Remove the input <code>SW</code> from the entity and</Line>
                  <Line>the constraints.</Line>
                </div></Para>
                <Para $mt={11.6}><Num>2.</Num><div>
                  <Line $w={390}>Create a 14-bit counter based on <code>CLK</code> that overflows implicitly. Instanti-</Line>
                  <Line $w={388}>ate your timer and use its output as a <i>clock-enable</i> (!) for the counter to</Line>
                  <Line>make it run at 100 Hz.</Line>
                </div></Para>
                <Para $mt={11.6}><Num>3.</Num><div>
                  <Line>Create a bitstream and test the design on the FPGA.</Line>
                </div></Para>
                <Para $mt={11.6}><Num>4.</Num><div>
                  <Line $w={388}>Open the <b>Device</b> view in the implemented design in Vivado. Activate</Line>
                  <Line $w={388}>the display of routing resources. Compare the routes between IOBs and</Line>
                  <Line $w={388}>flip-flops/LUTs for the clock input and other inputs/outputs. (You can</Line>
                  <Line $w={390}>open the <b>Nets</b> tree in the <b>Netlist</b> pane and select the signals named <code>CLK</code>,</Line>
                  <Line $w={390}><code>CLK_IBUF</code>, and <code>CLK_IBUF_BUFG</code>, or all other signals). Make screenshots.</Line>
                </div></Para>
                <Para $mt={5.6}><Num /><div>
                  <Line $w={388}>How and why do the routing topologies for clock signals and other</Line>
                  <Line>signals differ?</Line>
                </div></Para>
              </Page>
            </PageView>
            <Trough $w={14}>
              <Stepper $w={14} $h={19}><Tri d="u" /></Stepper>
              <Slider $h={44} $mt={99} />
              <Stepper $w={14} $h={19}><Tri d="d" /></Stepper>
            </Trough>
            <PdfHScroll>
              <Stepper $w={19} $h={14}><Tri d="l" /></Stepper>
              <HSlider />
              <Stepper $w={19} $h={14}><Tri d="r" /></Stepper>
            </PdfHScroll>
          </PageArea>
        </PdfBody>
      </PdfWindow>
    </Screen>
  );
}
